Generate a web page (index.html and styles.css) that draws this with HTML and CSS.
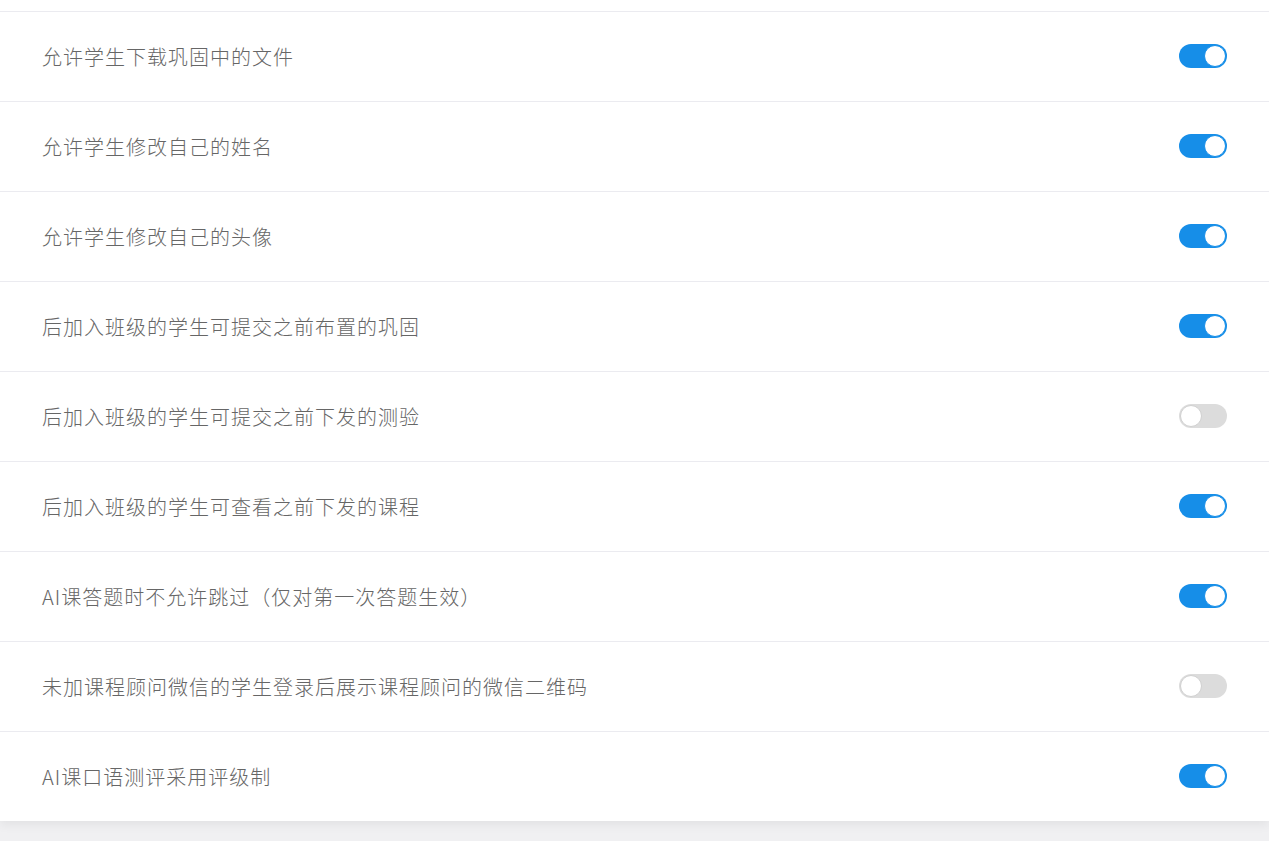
FILE: index.html
```html
<!DOCTYPE html>
<html lang="zh">
<head>
<meta charset="utf-8">
<title>设置</title>
<link rel="stylesheet" href="styles.css">
</head>
<body>
<div class="card">
  <div class="top"></div>
  <div class="row"><span class="label">允许学生下载巩固中的文件</span><span class="switch on"><span class="knob"></span></span></div>
  <div class="row"><span class="label">允许学生修改自己的姓名</span><span class="switch on"><span class="knob"></span></span></div>
  <div class="row"><span class="label">允许学生修改自己的头像</span><span class="switch on"><span class="knob"></span></span></div>
  <div class="row"><span class="label">后加入班级的学生可提交之前布置的巩固</span><span class="switch on"><span class="knob"></span></span></div>
  <div class="row"><span class="label">后加入班级的学生可提交之前下发的测验</span><span class="switch"><span class="knob"></span></span></div>
  <div class="row"><span class="label">后加入班级的学生可查看之前下发的课程</span><span class="switch on"><span class="knob"></span></span></div>
  <div class="row"><span class="label">AI课答题时不允许跳过（仅对第一次答题生效）</span><span class="switch on"><span class="knob"></span></span></div>
  <div class="row"><span class="label">未加课程顾问微信的学生登录后展示课程顾问的微信二维码</span><span class="switch"><span class="knob"></span></span></div>
  <div class="row"><span class="label">AI课口语测评采用评级制</span><span class="switch on"><span class="knob"></span></span></div>
</div>
</body>
</html>
```
FILE: styles.css
```css
html, body {
  margin: 0;
  padding: 0;
}
body {
  background: #f0f0f2;
  font-family: "Noto Sans CJK SC", "Microsoft YaHei", sans-serif;
  height: 841px;
  overflow: hidden;
}
.card {
  background: #fff;
  box-shadow: 0 4px 10px rgba(0, 0, 0, 0.06);
}
.top {
  height: 11px;
}
.row {
  display: flex;
  align-items: center;
  justify-content: space-between;
  height: 89px;
  border-top: 1px solid #ebebf0;
  padding: 0 42px;
}
.label {
  font-size: 20px;
  font-weight: 300;
  color: #666;
  letter-spacing: 1px;
}
.switch {
  position: relative;
  width: 48px;
  height: 24px;
  margin-bottom: 2px;
  border-radius: 12px;
  background: #dcdcdc;
  flex: none;
}
.switch .knob {
  position: absolute;
  top: 1px;
  left: 1px;
  width: 20px;
  height: 20px;
  border-radius: 50%;
  background: #fff;
  border: 1px solid #d0d0d0;
}
.switch.on {
  background: #168ee8;
}
.switch.on .knob {
  left: 25px;
  border-color: #168ee8;
}
```
